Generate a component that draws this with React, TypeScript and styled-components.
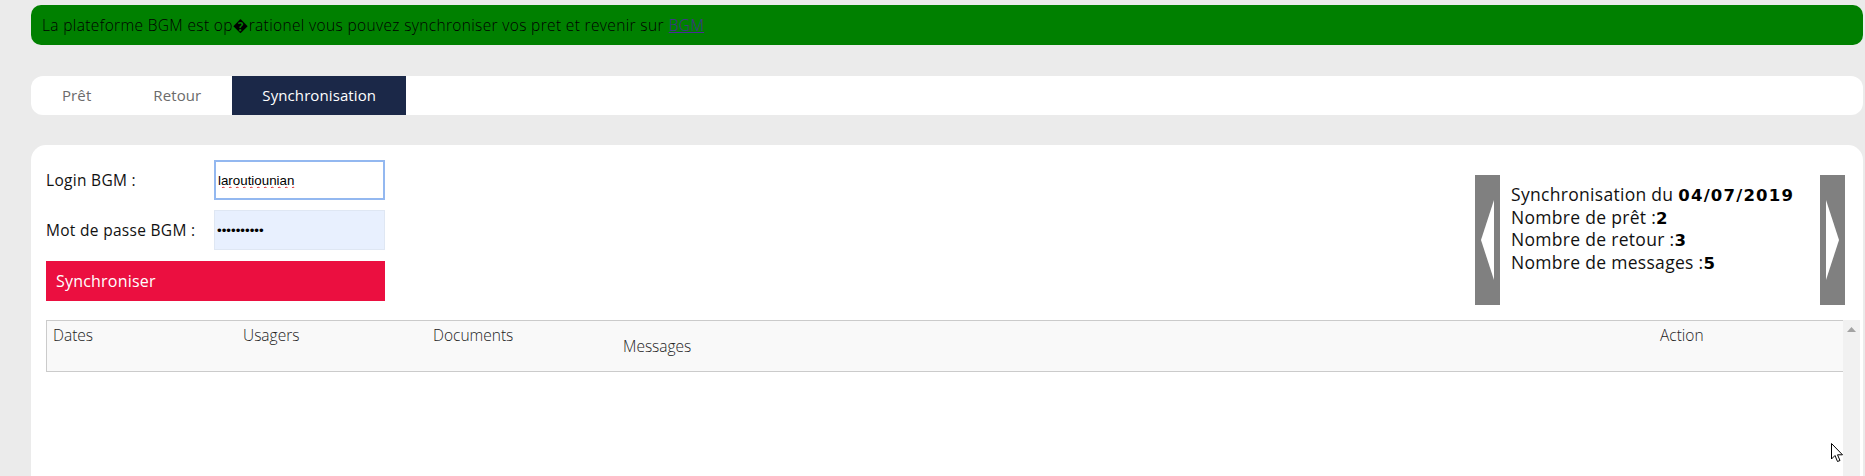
import React from "react";
import styled, { createGlobalStyle } from "styled-components";

const GlobalStyle = createGlobalStyle`
  html, body {
    margin: 0;
    padding: 0;
    background: #ebebeb;
    overflow: hidden;
  }
  body {
    font-family: "Open Sans", "Liberation Sans", sans-serif;
    color: #111;
  }
  * {
    box-sizing: border-box;
  }
`;

const Page = styled.div`
  position: relative;
  height: 476px;
  padding: 5px 2px 0 31px;
  display: flex;
  flex-direction: column;
`;

const Banner = styled.div`
  height: 40px;
  background: #008000;
  border-radius: 10px;
  display: flex;
  align-items: center;
  padding: 0 11px;
  font-size: 15.5px;
  letter-spacing: 0.35px;
  font-weight: 300;
  color: #000;

  a {
    color: #4a2a9a;
    text-decoration: underline;
    margin-left: 5px;
  }
`;

const TabBar = styled.nav`
  margin-top: 31px;
  height: 39px;
  background: #fff;
  border-radius: 12px;
  display: flex;
  overflow: hidden;
`;

const Tab = styled.div<{ $active?: boolean }>`
  padding: 0 ${(p) => (p.$active ? 30 : 31)}px;
  line-height: 39px;
  font-size: 15px;
  letter-spacing: 0.1px;
  color: ${(p) => (p.$active ? "#fff" : "#6b6b6b")};
  background: ${(p) => (p.$active ? "#1b2848" : "transparent")};
`;

const Panel = styled.section`
  margin-top: 30px;
  flex: 1;
  background: #fff;
  border-radius: 15px 15px 0 0;
  padding: 15px 3px 0 15px;
  display: flex;
  flex-direction: column;
`;

const TopRow = styled.div`
  display: flex;
  justify-content: space-between;
  align-items: flex-start;
`;

const Form = styled.form`
  width: 339px;
  display: flex;
  flex-direction: column;
  gap: 10px;
`;

const FormRow = styled.div`
  display: flex;
  align-items: center;
`;

const Label = styled.label`
  width: 168px;
  font-size: 15.5px;
  letter-spacing: 0.3px;
  color: #111;
`;

const Input = styled.input<{ $filled?: boolean }>`
  width: 171px;
  height: 40px;
  padding: 0 2px;
  font-family: "Liberation Sans", Arial, sans-serif;
  font-size: 13.33px;
  color: #000;
  outline: none;
  border: ${(p) => (p.$filled ? "1px solid #dfe7f3" : "2px solid #93b8f0")};
  background: ${(p) => (p.$filled ? "#e8f0fe" : "#fff")};
  text-decoration: ${(p) => (p.$filled ? "none" : "underline wavy #e02020")};
  text-decoration-thickness: 1px;
`;

const SyncButton = styled.button`
  margin-top: 1px;
  width: 339px;
  height: 40px;
  border: none;
  background: #eb0f40;
  color: #fff;
  text-align: left;
  padding: 0 10px;
  font-family: inherit;
  font-size: 16px;
  letter-spacing: 0.2px;
`;

const Carousel = styled.div`
  margin-top: 15px;
  margin-right: 15px;
  height: 130px;
  display: flex;
`;

const ArrowBar = styled.div`
  width: 25px;
  background: #808080;
  display: flex;
  align-items: center;
  justify-content: center;
`;

const SyncInfo = styled.div`
  width: 320px;
  padding: 9px 0 0 11px;
  font-size: 17.5px;
  letter-spacing: 0.3px;
  line-height: 21.5px;
  color: #111;

  b {
    font-family: "DejaVu Sans", sans-serif;
    font-weight: 700;
    font-size: 16.5px;
    letter-spacing: 1.2px;
    color: #000;
  }
`;

const TableArea = styled.div`
  margin-top: 15px;
  flex: 1;
  display: flex;
`;

const Table = styled.div`
  flex: 1;
`;

const HeaderRow = styled.div`
  height: 52px;
  background: #f9f9f9;
  border: 1px solid #cbcbcb;
  border-right: none;
  display: flex;
  font-size: 15.5px;
  font-weight: 300;
  color: #222;
`;

const HeaderCell = styled.div<{ $w?: number; $lower?: boolean }>`
  width: ${(p) => (p.$w ? `${p.$w}px` : "auto")};
  flex: ${(p) => (p.$w ? "none" : 1)};
  padding: ${(p) => (p.$lower ? 14 : 3)}px 0 0 6px;
`;

const Scrollbar = styled.div`
  width: 17px;
  background: #f1f1f1;
  display: flex;
  justify-content: center;
  padding-top: 7px;
`;

const Pointer = styled.svg`
  position: absolute;
  left: 1831px;
  top: 443px;
`;

const Triangle = ({ dir }: { dir: "left" | "right" }) => (
  <svg width="15" height="80" viewBox="0 0 15 80">
    <path d={dir === "left" ? "M14 0 L1 40 L14 80 Z" : "M1 0 L14 40 L1 80 Z"} fill="#fff" />
  </svg>
);

export default function App() {
  return (
    <>
      <GlobalStyle />
      <Page>
        <Banner>
          La plateforme BGM est op�rationel vous pouvez synchroniser vos pret et revenir sur
          <a href="#">BGM</a>
        </Banner>

        <TabBar>
          <Tab>Prêt</Tab>
          <Tab>Retour</Tab>
          <Tab $active>Synchronisation</Tab>
        </TabBar>

        <Panel>
          <TopRow>
            <Form onSubmit={(e) => e.preventDefault()}>
              <FormRow>
                <Label>Login BGM :</Label>
                <Input defaultValue="laroutiounian" spellCheck />
              </FormRow>
              <FormRow>
                <Label>Mot de passe BGM :</Label>
                <Input $filled type="password" defaultValue="motdepasse" />
              </FormRow>
              <SyncButton type="submit">Synchroniser</SyncButton>
            </Form>

            <Carousel>
              <ArrowBar>
                <Triangle dir="left" />
              </ArrowBar>
              <SyncInfo>
                Synchronisation du <b>04/07/2019</b>
                <br />
                Nombre de prêt :<b>2</b>
                <br />
                Nombre de retour :<b>3</b>
                <br />
                Nombre de messages :<b>5</b>
              </SyncInfo>
              <ArrowBar>
                <Triangle dir="right" />
              </ArrowBar>
            </Carousel>
          </TopRow>

          <TableArea>
            <Table>
              <HeaderRow>
                <HeaderCell $w={190}>Dates</HeaderCell>
                <HeaderCell $w={190}>Usagers</HeaderCell>
                <HeaderCell $w={190}>Documents</HeaderCell>
                <HeaderCell $w={1037} $lower>
                  Messages
                </HeaderCell>
                <HeaderCell>Action</HeaderCell>
              </HeaderRow>
            </Table>
            <Scrollbar>
              <svg width="9" height="5" viewBox="0 0 9 5">
                <path d="M0 5 L4.5 0 L9 5 Z" fill="#a3a3a3" />
              </svg>
            </Scrollbar>
          </TableArea>
        </Panel>

        <Pointer width="13" height="20" viewBox="0 0 13 20">
          <path d="M0.5 0.5 L0.5 16 L4 12.5 L6.5 18.5 L9 17.5 L6.5 11.8 L11.5 11.8 Z" fill="#fff" stroke="#000" strokeWidth="1" />
        </Pointer>
      </Page>
    </>
  );
}
